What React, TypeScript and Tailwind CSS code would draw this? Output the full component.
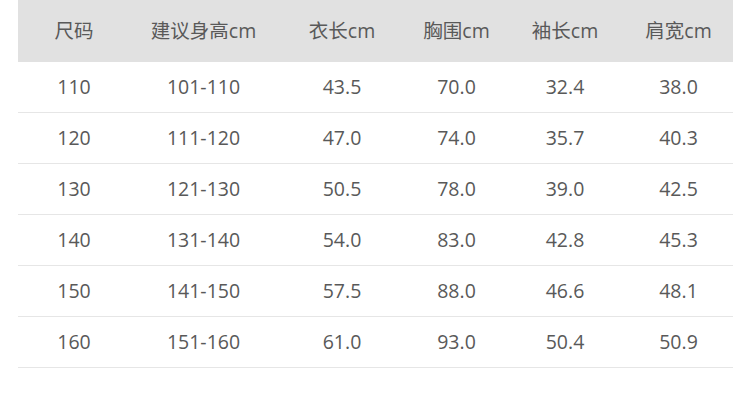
import React from "react";

const headers = ["尺码", "建议身高cm", "衣长cm", "胸围cm", "袖长cm", "肩宽cm"];
const rows = [
  ["110", "101-110", "43.5", "70.0", "32.4", "38.0"],
  ["120", "111-120", "47.0", "74.0", "35.7", "40.3"],
  ["130", "121-130", "50.5", "78.0", "39.0", "42.5"],
  ["140", "131-140", "54.0", "83.0", "42.8", "45.3"],
  ["150", "141-150", "57.5", "88.0", "46.6", "48.1"],
  ["160", "151-160", "61.0", "93.0", "50.4", "50.9"],
];

const cols = "grid w-[715px] grid-cols-[112px_147px_130px_99px_118px_109px]";

export default function App() {
  return (
    <div
      className="w-[750px] h-[409px] bg-white pl-[18px] text-[#595959]"
      style={{ fontFamily: '"Open Sans", "Noto Sans CJK SC", sans-serif' }}
    >
      <div className={`${cols} h-[62px] bg-[#e1e1e1] items-center text-[19.5px] pb-[1px]`}>
        {headers.map((h) => (
          <div key={h} className="text-center">{h}</div>
        ))}
      </div>
      {rows.map((r) => (
        <div key={r[0]} className={`${cols} h-[51px] border-b border-[#e6e6e6] items-center text-[19.5px]`}>
          {r.map((c, i) => (
            <div key={i} className="text-center">{c}</div>
          ))}
        </div>
      ))}
    </div>
  );
}
